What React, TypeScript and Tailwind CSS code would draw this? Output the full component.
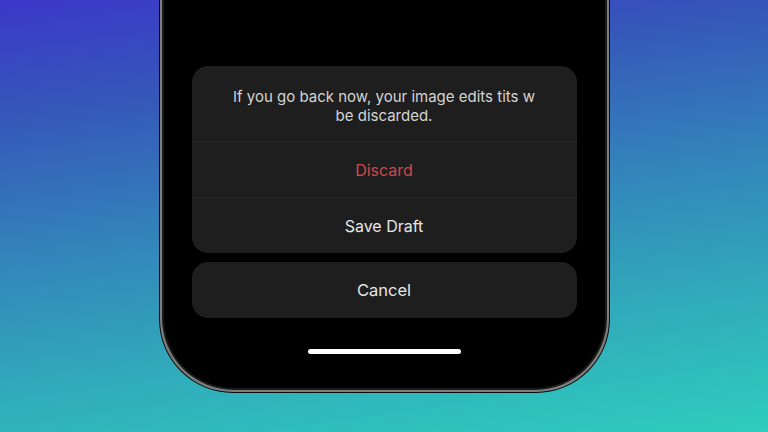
import React from 'react';

const font = { fontFamily: 'Inter, "Noto Sans", sans-serif' };

const SheetRow = ({ label, tone }: { label: string; tone: string }) => (
  <button className={`h-[56px] w-full border-t border-[#2a2a2c] text-[16px] ${tone}`}>
    {label}
  </button>
);

export default function App() {
  return (
    <div
      className="flex h-[432px] w-[768px] justify-center overflow-hidden bg-[linear-gradient(172deg,#3b38c9_0%,#3558b9_22%,#3384bb_48%,#31a9ba_72%,#2ecdbe_100%)]"
      style={font}
    >
      {/* phone body, top cut off by the frame */}
      <div className="h-[393px] w-[451px] rounded-b-[74px] border-x border-b border-[#0c0c0c] bg-[#7d7d7d] px-[2px] pb-[2px]">
        <div className="h-full w-full rounded-b-[72px] bg-[#1a1a1a] px-[2px] pb-[2px]">
          <div className="flex h-full w-full flex-col items-center rounded-b-[70px] bg-black px-[28px] pt-[66px]">
            <div className="w-full overflow-hidden rounded-[16px] bg-[#1e1e1f]">
              <p className="px-6 pb-[16px] pt-[21px] text-center text-[15px] leading-[19px] text-[#d4d4d4]">
                If you go back now, your image edits tits w
                <br />
                be discarded.
              </p>
              <SheetRow label="Discard" tone="text-[#d0474a]" />
              <SheetRow label="Save Draft" tone="text-[#e6e6e6]" />
            </div>
            <button className="mt-[9px] h-[56px] w-full rounded-[16px] bg-[#1e1e1f] text-[16.5px] text-[#e6e6e6]">
              Cancel
            </button>
            <div className="mt-[31px] h-[5px] w-[153px] rounded-full bg-white" />
          </div>
        </div>
      </div>
    </div>
  );
}
